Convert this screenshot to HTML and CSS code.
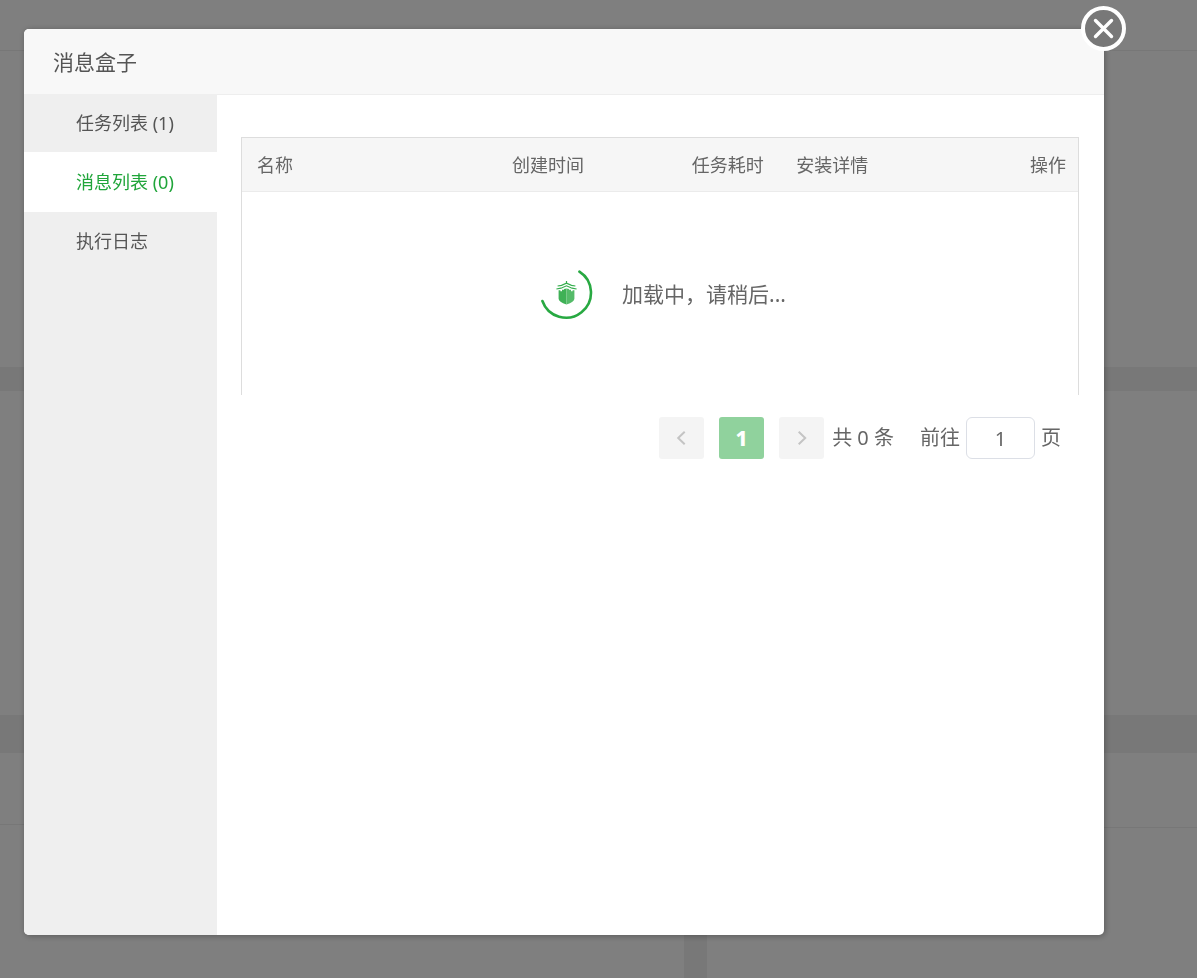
FILE: index.html
```html
<!DOCTYPE html>
<html lang="zh-CN">
<head>
<meta charset="utf-8">
<meta name="viewport" content="width=device-width, initial-scale=1">
<title>消息盒子</title>
<link rel="stylesheet" href="styles.css">
</head>
<body>
<div class="page" aria-hidden="true">
  <div class="page-bar"></div>
  <div class="panel panel-overview"></div>
  <div class="panel panel-status"></div>
  <div class="panel-row">
    <div class="panel"><div class="panel-head"></div></div>
    <div class="panel"><div class="panel-head panel-head-tall"></div></div>
  </div>
</div>

<div class="backdrop">
  <section class="dialog" role="dialog" aria-modal="true" aria-labelledby="dialog-title">
    <button class="close" type="button" aria-label="关闭">
      <svg viewBox="0 0 45 45" width="45" height="45">
        <circle cx="22.5" cy="22.5" r="20.5" fill="#787878" stroke="#fff" stroke-width="4"/>
        <path d="M14.5 14.5 30.5 30.5M30.5 14.5 14.5 30.5" stroke="#fff" stroke-width="3.4" stroke-linecap="round"/>
      </svg>
    </button>
    <header class="dialog-head">
      <h1 class="dialog-title" id="dialog-title">消息盒子</h1>
    </header>
    <div class="dialog-body">
      <nav class="tabs">
        <button class="tab" type="button">任务列表 (1)</button>
        <button class="tab tab-active" type="button">消息列表 (0)</button>
        <button class="tab" type="button">执行日志</button>
      </nav>
      <main class="content">
        <div class="table-box">
          <table class="table">
            <colgroup>
              <col class="col-name"><col class="col-time"><col class="col-cost"><col class="col-detail"><col class="col-action">
            </colgroup>
            <thead>
              <tr>
                <th>名称</th><th>创建时间</th><th>任务耗时</th><th>安装详情</th><th class="align-right">操作</th>
              </tr>
            </thead>
          </table>
          <div class="loading" role="status">
            <svg viewBox="0 0 54 54" width="54" height="54" fill="none">
              <path d="M39.4 4.6A25 25 0 1 1 2.4 34" stroke="#28a942" stroke-width="2.6" stroke-linecap="round"/>
              <g stroke="#35ae4d" stroke-width="1.2">
                <path d="M26.5 14V17"/>
                <path d="M17.6 19 21.5 18.4 26.5 16.2 31.5 18.4 35.4 19"/>
                <path d="M16.4 22 21 21.2 26.5 18.8 32 21.2 36.6 22"/>
              </g>
              <path d="M18.6 23.2H20.4V24.2H22V22.8H24V22L26.5 21.4V37.6Q18.6 35 18.6 31.8Z" fill="#3fb156"/>
              <path d="M34.4 23.2H32.6V24.2H31V22.8H29V22L26.5 21.4V37.6Q34.4 35 34.4 31.8Z" fill="#55bb69"/>
            </svg>
            <span>加载中，请稍后...</span>
          </div>
        </div>
        <div class="pager">
          <div class="pager-pages">
            <button class="pager-button" type="button" aria-label="上一页" disabled>
              <svg viewBox="0 0 16 16" width="16" height="16"><path d="M10.7 1.7 4.2 8l6.5 6.3"/></svg>
            </button>
            <button class="pager-button pager-current" type="button">1</button>
            <button class="pager-button" type="button" aria-label="下一页" disabled>
              <svg viewBox="0 0 16 16" width="16" height="16"><path d="M4.7 1.7 11.2 8l-6.5 6.3"/></svg>
            </button>
          </div>
          <span class="pager-total">共 0 条</span>
          <div class="pager-jump">
            <label for="page-number">前往</label>
            <input class="pager-input" id="page-number" type="text" inputmode="numeric" value="1">
            <span>页</span>
          </div>
        </div>
      </main>
    </div>
  </section>
</div>
</body>
</html>
```
FILE: styles.css
```css
* {
  box-sizing: border-box;
}

body {
  margin: 0;
  height: 100vh;
  overflow: hidden;
  background: #f1f1f1;
  color: #666;
  font: 18px/28px "Noto Sans", "Noto Sans CJK SC", sans-serif;
}

button,
input {
  font: inherit;
  color: inherit;
}

/* Dashboard behind the dialog */
.page {
  display: flex;
  flex-direction: column;
  height: 100%;
}

.page-bar {
  height: 51px;
  background: #fff;
  border-bottom: 1px solid #eee;
}

.panel {
  background: #fff;
}

.panel-overview {
  height: 316px;
  margin-bottom: 24px;
}

.panel-status {
  height: 324px;
  margin-bottom: 38px;
}

.panel-row {
  display: grid;
  grid-template-columns: 684fr 490fr;
  gap: 23px;
  flex: 1;
}

.panel-head {
  height: 72px;
  border-bottom: 1px solid #eee;
}

.panel-head-tall {
  height: 75px;
}

/* Dialog */
.backdrop {
  position: fixed;
  inset: 0;
  display: flex;
  padding: 29px 93px 43px 24px;
  background: rgba(0, 0, 0, 0.5);
}

.dialog {
  position: relative;
  display: flex;
  flex-direction: column;
  flex: 1;
  background: #fff;
  border-radius: 5px;
  box-shadow: 1px 1px 6px rgba(0, 0, 0, 0.3);
}

.close {
  position: absolute;
  top: -23px;
  right: -22px;
  padding: 0;
  border: 0;
  border-radius: 50%;
  background: none;
  cursor: pointer;
}

.close svg {
  display: block;
}

.dialog-head {
  padding: 19px 29px 18px;
  background: #f8f8f8;
  border-radius: 5px 5px 0 0;
}

.dialog-title {
  margin: 0;
  color: #555;
  font-size: 21px;
  font-weight: 400;
  line-height: 28px;
}

.dialog-body {
  display: flex;
  flex: 1;
}

.tabs {
  width: 193px;
  flex: none;
  background: #efefef;
  border-radius: 0 0 0 5px;
}

.tab {
  display: block;
  width: 100%;
  padding: 15px 0 15px 52px;
  border: 0;
  background: none;
  color: #555;
  text-align: left;
  cursor: pointer;
}

.tab-active {
  padding-block: 16px;
  background: #fff;
  color: #20a53a;
}

.content {
  flex: 1;
  padding: 42px 25px 0 24px;
  border-top: 1px solid #eee;
}

.table-box {
  border: 1px solid #ddd;
  border-bottom: 0;
}

.table {
  width: 100%;
  table-layout: fixed;
  border-collapse: collapse;
}

.col-name { width: 30.5%; }
.col-time { width: 21.5%; }
.col-cost { width: 12.5%; }
.col-detail { width: 20%; }

.table th {
  padding: 13px 12px 12px 15px;
  background: #f6f6f6;
  border-bottom: 1px solid #ebebeb;
  font-weight: 400;
  text-align: left;
}

.table .align-right {
  text-align: right;
}

.loading {
  display: flex;
  align-items: center;
  justify-content: center;
  gap: 28px;
  padding: 75px 0 74px 6px;
  font-size: 21px;
}

.pager {
  display: flex;
  align-items: center;
  justify-content: flex-end;
  margin-top: 22px;
  padding-right: 18px;
  font-size: 20px;
}

.pager-pages {
  display: flex;
  gap: 15px;
}

.pager-button {
  display: grid;
  place-items: center;
  width: 45px;
  height: 42px;
  padding: 0;
  border: 0;
  border-radius: 3px;
  background: #f4f4f4;
}

.pager-button path {
  fill: none;
  stroke: #c4c4c4;
  stroke-width: 2;
}

.pager-current {
  background: #90d29d;
  color: #fff;
  font-size: 21px;
  font-weight: 800;
}

.pager-total {
  margin: 0 26px 0 8px;
}

.pager-jump {
  display: flex;
  align-items: center;
  gap: 6px;
}

.pager-input {
  width: 69px;
  height: 42px;
  padding: 0;
  border: 1px solid #dcdfe6;
  border-radius: 6px;
  background: #fff;
  text-align: center;
}
```
